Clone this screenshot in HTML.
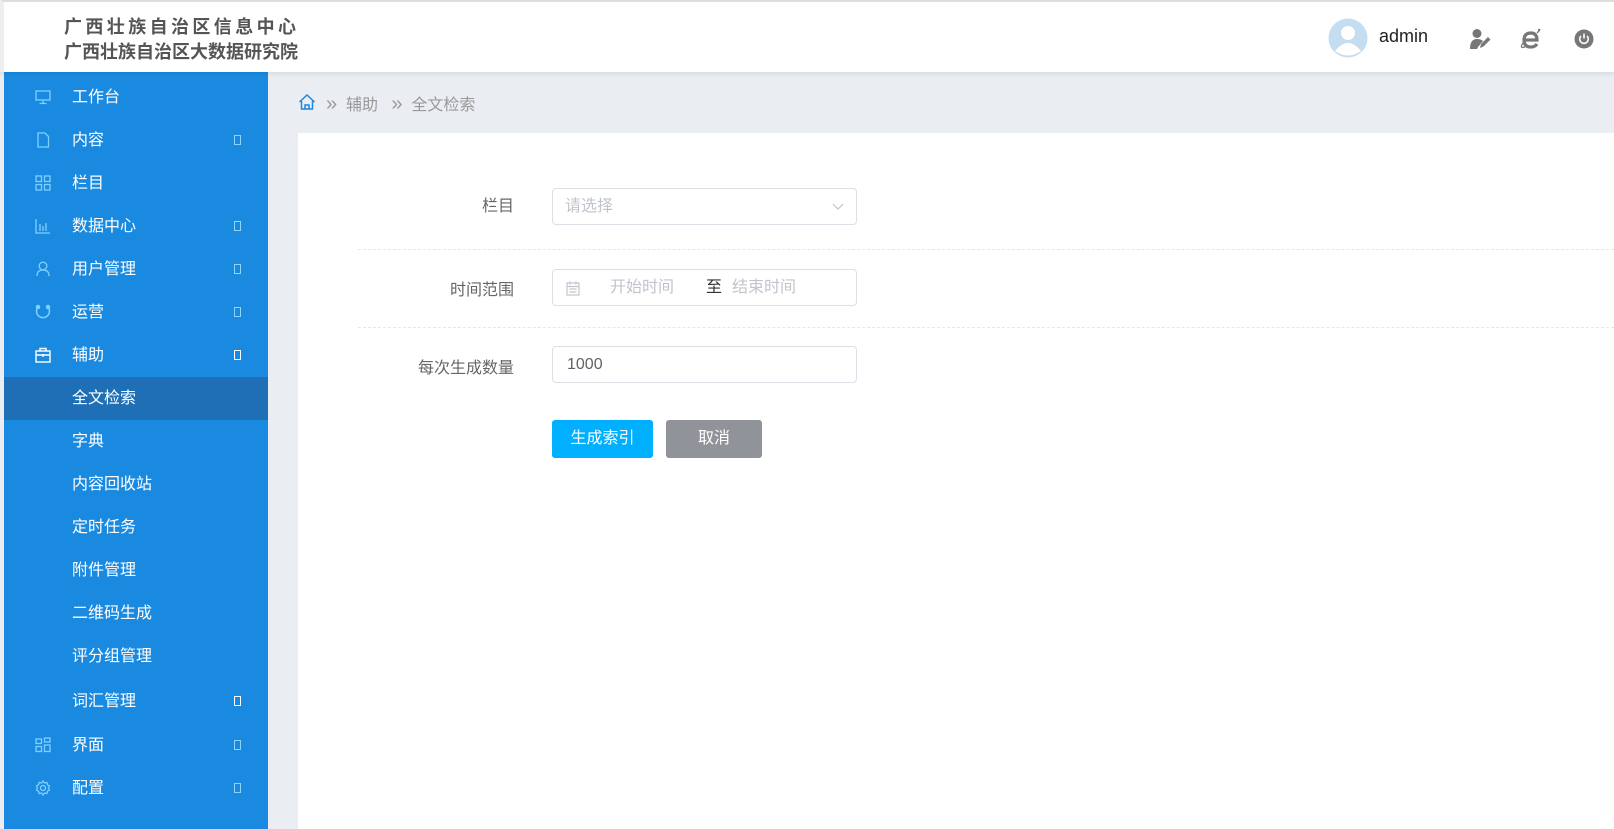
<!DOCTYPE html>
<html><head><meta charset="utf-8">
<style>
*{margin:0;padding:0;box-sizing:border-box}
body{width:1614px;height:829px;overflow:hidden;background:#eaedf2;font-family:"Liberation Sans","Noto Sans CJK SC",sans-serif;position:relative}
.hdr{position:absolute;left:0;top:0;width:1614px;height:72px;background:#fff;border-top:2px solid #ddd;border-left:4px solid #eee;box-shadow:0 2px 4px rgba(0,0,0,.08);z-index:2}
.logo{position:absolute;left:60px;color:#555;font-weight:bold;font-size:18px;white-space:nowrap}
.side{position:absolute;left:4px;top:72px;width:264px;height:757px;background:#1a8ae0}
.it{position:absolute;left:0;width:264px;height:43px;line-height:43px;color:#fff;font-size:16px}
.it .t{position:absolute;left:68px}
.it svg{position:absolute;left:31px;top:13px}
.it .a{position:absolute;left:230px;top:16px;width:7px;height:10px;border:1px solid #8fd4ff}
.act{background:#1e6fb5}
.card{position:absolute;left:298px;top:133px;width:1316px;height:696px;background:#fff}
.lbl{position:absolute;right:1100px;color:#666;font-size:16px;white-space:nowrap}
.inp{position:absolute;left:552px;width:305px;height:37px;border:1px solid #dcdfe6;border-radius:4px;background:#fff;font-size:16px;line-height:35px}
.dash{position:absolute;left:358px;right:0;border-top:1px dashed #e4e7ed}
.btn{position:absolute;top:420px;height:38px;line-height:38px;color:#fff;text-align:center;border-radius:3px;font-size:16px}
</style></head><body>
<div class="hdr">
<div class="logo" style="top:11px;letter-spacing:3.4px">广西壮族自治区信息中心</div>
<div class="logo" style="top:36px">广西壮族自治区大数据研究院</div>
<svg style="position:absolute;left:1324px;top:16px" width="40" height="40" viewBox="0 0 40 40"><circle cx="20" cy="20" r="19.5" fill="#c5ddf0"/><circle cx="20" cy="15" r="7" fill="#fff"/><path d="M7 33 Q20 17 33 33 Q20 42 7 33Z" fill="#fff"/></svg>
<div style="position:absolute;left:1375px;top:24px;font-size:18px;color:#222">admin</div>
<svg style="position:absolute;left:1464px;top:26px" width="24" height="22" viewBox="0 0 24 22"><circle cx="9" cy="5.5" r="4.5" fill="#777"/><path d="M2 21 Q2 11 9 11 Q13 11 15 13 L10 19 L9 21Z" fill="#777"/><path d="M12 20 L13 16 L20 9 L22.5 11.5 L15.5 18.5Z" fill="#777"/></svg>
<svg style="position:absolute;left:1515px;top:26px" width="24" height="22" viewBox="0 0 24 22"><path d="M6 12 H18 Q18 5 12 5 Q5 5 5 12 Q5 19 12 19 Q16 19 18 16" stroke="#777" stroke-width="3.2" fill="none"/><path d="M4 15 Q0 21 6 19 M18 5 Q23 0 19 2" stroke="#777" stroke-width="1.3" fill="none"/></svg>
<svg style="position:absolute;left:1570px;top:27px" width="20" height="20" viewBox="0 0 20 20"><circle cx="10" cy="10" r="9.5" fill="#777"/><path d="M7 7 A4.3 4.3 0 1 0 13 7" stroke="#fff" stroke-width="1.6" fill="none"/><path d="M10 4.5 V9.5" stroke="#fff" stroke-width="1.6"/></svg>
</div>
<div class="side">
<div class="it" style="top:4px"><svg width="16" height="16" viewBox="0 0 16 16" fill="none" stroke="#7fd0ff" stroke-width="1.3"><rect x="1" y="2" width="14" height="9"/><path d="M8 11v3M4.5 14.5h7"/></svg><span class="t">工作台</span></div>
<div class="it" style="top:47px"><svg width="16" height="16" viewBox="0 0 16 16" fill="none" stroke="#7fd0ff" stroke-width="1.3"><path d="M3 1h7l3.5 3.5V15H3Z"/></svg><span class="t">内容</span><span class="a"></span></div>
<div class="it" style="top:90px"><svg width="16" height="16" viewBox="0 0 16 16" fill="none" stroke="#7fd0ff" stroke-width="1.3"><rect x="1" y="1" width="5.5" height="5.5"/><rect x="9.5" y="1" width="5.5" height="5.5"/><rect x="1" y="9.5" width="5.5" height="5.5"/><rect x="9.5" y="9.5" width="5.5" height="5.5"/></svg><span class="t">栏目</span></div>
<div class="it" style="top:133px"><svg width="16" height="16" viewBox="0 0 16 16" fill="none" stroke="#7fd0ff" stroke-width="1.3"><path d="M1 1v14h14M5 13V6M8 13V8M11 13V5"/></svg><span class="t">数据中心</span><span class="a"></span></div>
<div class="it" style="top:176px"><svg width="16" height="16" viewBox="0 0 16 16" fill="none" stroke="#7fd0ff" stroke-width="1.3"><circle cx="8" cy="5" r="3.8"/><path d="M2 15Q2 9 8 9Q14 9 14 15"/></svg><span class="t">用户管理</span><span class="a"></span></div>
<div class="it" style="top:219px"><svg width="16" height="16" viewBox="0 0 16 16" fill="none" stroke="#7fd0ff" stroke-width="1.5"><path d="M3 3A6.5 6.5 0 1 0 13 3"/><circle cx="3" cy="3" r="1.5" fill="#7fd0ff"/><circle cx="13" cy="3" r="1.5" fill="#7fd0ff"/></svg><span class="t">运营</span><span class="a"></span></div>
<div class="it" style="top:262px"><svg width="16" height="16" viewBox="0 0 16 16" fill="none" stroke="#fff" stroke-width="1.4"><rect x="1" y="4" width="14" height="11"/><path d="M5 4V1.5h6V4M1 8h14M8 7v3"/></svg><span class="t">辅助</span><span class="a" style="border-color:#fff"></span></div>
<div class="it act" style="top:305px"><span class="t">全文检索</span></div>
<div class="it" style="top:348px"><span class="t">字典</span></div>
<div class="it" style="top:391px"><span class="t">内容回收站</span></div>
<div class="it" style="top:434px"><span class="t">定时任务</span></div>
<div class="it" style="top:477px"><span class="t">附件管理</span></div>
<div class="it" style="top:520px"><span class="t">二维码生成</span></div>
<div class="it" style="top:563px"><span class="t">评分组管理</span></div>
<div class="it" style="top:608px"><span class="t">词汇管理</span><span class="a" style="border-color:#fff"></span></div>
<div class="it" style="top:652px"><svg width="16" height="16" viewBox="0 0 16 16" fill="none" stroke="#7fd0ff" stroke-width="1.3"><rect x="1" y="2" width="5.5" height="4.5"/><rect x="9.5" y="1" width="5.5" height="4"/><rect x="1" y="9.5" width="5.5" height="5"/><rect x="9.5" y="8" width="5.5" height="6.5"/></svg><span class="t">界面</span><span class="a"></span></div>
<div class="it" style="top:695px"><svg width="16" height="16" viewBox="0 0 16 16" fill="none" stroke="#7fd0ff" stroke-width="1.3"><circle cx="8" cy="8" r="2.5"/><path d="M8 1l1.5 2 2.4-.6.6 2.4 2 1.2-1 2 1 2-2 1.2-.6 2.4-2.4-.6L8 15l-1.5-2-2.4.6-.6-2.4-2-1.2 1-2-1-2 2-1.2.6-2.4 2.4.6Z"/></svg><span class="t">配置</span><span class="a"></span></div>
</div>
<svg style="position:absolute;left:298px;top:93px" width="18" height="18" viewBox="0 0 18 18" fill="none" stroke="#1a8ae0" stroke-width="1.5"><path d="M1.5 9L9 2l7.5 7M3.5 8v8h11V8M7 16v-4h4v4"/></svg>
<div style="position:absolute;left:326px;top:91px;font-size:16px;color:#999;white-space:nowrap"><span style="font-size:20px;line-height:16px">»</span>&nbsp;&nbsp;辅助&nbsp;&nbsp;&nbsp;<span style="font-size:20px;line-height:16px">»</span>&nbsp;&nbsp;全文检索</div>
<div class="card"></div>
<div class="lbl" style="top:192px">栏目</div>
<div class="inp" style="top:188px;color:#c0c4cc;padding-left:12px">请选择<svg style="position:absolute;right:12px;top:14px" width="12" height="8" viewBox="0 0 12 8" fill="none" stroke="#c0c4cc" stroke-width="1.2"><path d="M1 1l5 5 5-5"/></svg></div>
<div class="dash" style="top:249px"></div>
<div class="lbl" style="top:276px">时间范围</div>
<div class="inp" style="top:269px;color:#c0c4cc"><svg style="position:absolute;left:13px;top:11px" width="14" height="15" viewBox="0 0 14 15" fill="none" stroke="#c0c4cc" stroke-width="1.2"><rect x="1" y="2" width="12" height="12"/><path d="M1 5.5h12M4 0.5v3M10 0.5v3M3.5 8h7M3.5 11h7"/></svg><span style="position:absolute;left:57px">开始时间</span><span style="position:absolute;left:153px;color:#303133">至</span><span style="position:absolute;left:179px">结束时间</span></div>
<div class="dash" style="top:327px"></div>
<div class="lbl" style="top:354px">每次生成数量</div>
<div class="inp" style="top:346px;color:#606266;padding-left:14px">1000</div>
<div class="btn" style="left:552px;width:101px;background:#00b0ff">生成索引</div>
<div class="btn" style="left:666px;width:96px;background:#909399">取消</div>
</body></html>
